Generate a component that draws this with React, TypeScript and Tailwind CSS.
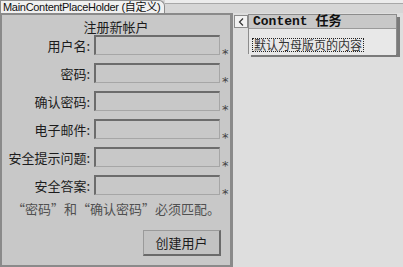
import { ReactNode } from 'react';

const cjk = "font-['Noto_Sans_CJK_SC',sans-serif]";

const fields = ['用户名:', '密码:', '确认密码:', '电子邮件:', '安全提示问题:', '安全答案:'];

function Field({ label }: { label: string }) {
  return (
    <div className="flex items-center h-[20px]">
      <div className="w-[92px] pr-[4px] text-right text-[13px] leading-[13px] text-[#1c1c1c] whitespace-nowrap">
        {label}
      </div>
      <div className="w-[126px] h-[20px] border-t-2 border-l-2 border-r border-b border-t-[#6c6c6c] border-l-[#6c6c6c] border-r-[#a6a6a6] border-b-[#a6a6a6] bg-[#c8c8c8]" />
      <span className="self-end ml-[2px] -mb-[5px] text-[13px] leading-[13px] text-[#444] font-['DejaVu_Sans',sans-serif]">*</span>
    </div>
  );
}

function SmartTag({ children }: { children: ReactNode }) {
  return (
    <div className="mt-[1px] w-[149px] h-[40px] flex flex-col border border-[#8c8c8c] shadow-[3px_3px_0_#7a7a7a]">
      {children}
    </div>
  );
}

export default function App() {
  return (
    <div className={`w-[403px] h-[267px] bg-[#dedede] overflow-hidden flex flex-col ${cjk}`}>
      {/* tab strip */}
      <div className="h-[13px] flex bg-[#d6d6d6]">
        <div className="h-[13px] pl-[2px] pr-[4px] bg-[#f0f0f0] border-l border-r border-t border-[#8c8c8c] rounded-tr-[6px] text-[11px] leading-[12px] text-[#111] font-['Liberation_Sans','Noto_Sans_CJK_SC',sans-serif] whitespace-nowrap tracking-[-0.3px]">
          MainContentPlaceHolder (自定义)
        </div>
        <div className="flex-1 h-[4px] bg-[#ececec] border-b border-[#a8a8a8]" />
      </div>

      <div className="flex flex-1">
        {/* form panel */}
        <div className="w-[233px] h-[254px] bg-[#c8c8c8] border-t-2 border-l-2 border-r-[3px] border-b-2 border-[#8a8a8a] flex flex-col">
          <div className="h-[20px] pt-[5px] text-center text-[13px] leading-[13px] text-[#1c1c1c]">注册新帐户</div>
          <div className="flex flex-col gap-[8px]">
            {fields.map((f) => (
              <Field key={f} label={f} />
            ))}
          </div>
          <div className="mt-[7px] text-center text-[13px] leading-[13px] text-[#505050] whitespace-nowrap">
            “密码”和“确认密码”必须匹配。
          </div>
          <div className="mt-[15px] flex justify-end pr-[9px]">
            <div className="w-[78px] h-[26px] flex items-center justify-center bg-[#c2c2c2] border-t border-l border-[#9a9a9a] border-r-2 border-b-2 border-r-[#6a6a6a] border-b-[#6a6a6a] text-[13px] leading-[13px] text-[#1c1c1c]">
              创建用户
            </div>
          </div>
        </div>

        {/* smart tag */}
        <div className="ml-[1px] mt-[2px] w-[14px] h-[13px] bg-[#f2f2f2] border border-[#8c8c8c] flex items-center justify-center">
          <svg width="6" height="8" viewBox="0 0 6 8">
            <path d="M5 0.5 L1.5 4 L5 7.5" fill="none" stroke="#333" strokeWidth="1.2" />
          </svg>
        </div>
        <SmartTag>
          <div className="h-[19px] bg-[#c8c8c8] border-b border-[#9a9a9a] flex items-center pl-[4px] text-[13px] leading-[13px] font-bold text-[#111] font-['Liberation_Mono','Noto_Sans_CJK_SC',monospace] whitespace-nowrap">
            Content 任务
          </div>
          <div className="flex-1 bg-[#e8e8e8] pl-[3px] pt-[2px]">
            <span className="inline-block border border-dotted border-[#222] text-[12px] leading-[12px] text-[#333] px-[1px] whitespace-nowrap">
              默认为母版页的内容
            </span>
          </div>
        </SmartTag>
      </div>
    </div>
  );
}
